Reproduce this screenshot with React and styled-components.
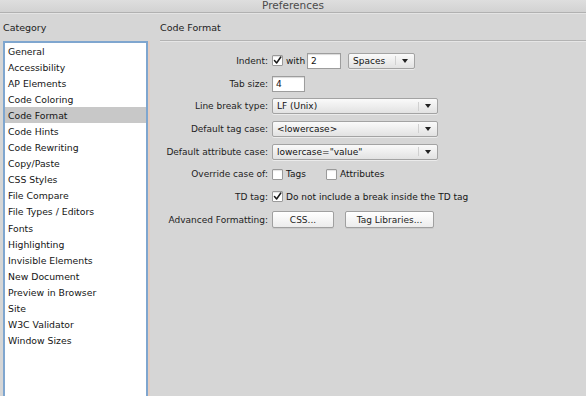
import styled, { createGlobalStyle } from 'styled-components'


const GlobalStyle = createGlobalStyle`
    html, body {
        margin: 0;
        padding: 0;
        background: #d6d6d6;
    }

    body {
        font-family: "DejaVu Sans", "Noto Sans", sans-serif;
        color: #1e1e1e;
    }
`

const StyledWindow = styled.div`
    width: 586px;
    height: 396px;
    overflow: hidden;
    display: flex;
    flex-direction: column;

    background: #d6d6d6;
`

const StyledTitleBar = styled.div`
    height: 12px;
    flex-shrink: 0;
    display: flex;
    align-items: flex-end;
    justify-content: center;

    background: linear-gradient( #dedede, #d2d2d2 );
    border-bottom: 1px solid #b1b1b1;
    box-shadow: 0 1px 0 #e4e4e4;

    color: #4a4a4a;
    font-size: 10.5px;
    line-height: 14px;
`

const StyledBody = styled.div`
    flex: 1;
    display: grid;
    grid-template-columns: 150px 1fr;
    min-height: 0;
`

const StyledSidebar = styled.div`
    display: flex;
    flex-direction: column;
    padding-left: 3px;
    min-height: 0;
`

const StyledHeader = styled.div`
    height: 28px;
    flex-shrink: 0;
    display: flex;
    align-items: center;
    box-sizing: border-box;
    padding-top: 1px;
    margin-left: ${ ({ $indent }) => $indent || 0 }px;

    font-size: 9.5px;
    color: #222;

    ${ ({ $ruled }) => $ruled && `
        border-bottom: 1px solid #b3b3b3;
        box-shadow: 0 1px 0 #e6e6e6;
    ` }
`

const StyledList = styled.ul`
    flex: 1;
    width: 145px;
    box-sizing: border-box;
    margin: 0;
    padding: 0;
    list-style: none;

    background: #fff;
    border: 2px solid #7fa6cf;
    border-bottom: none;
    box-shadow: 2px 0 0 rgba( 236, 200, 180, 0.55 );
`

const StyledItem = styled.li`
    height: 16.1px;
    display: flex;
    align-items: center;
    padding-left: 3px;

    font-size: 9.3px;
    color: #151515;
    white-space: nowrap;

    background: ${ ({ $selected }) => $selected ? '#c8c8c8' : 'transparent' };
`

const StyledMain = styled.div`
    display: flex;
    flex-direction: column;
    min-width: 0;
`

const StyledForm = styled.div`
    display: grid;
    grid-template-columns: 110px 1fr;
    grid-auto-rows: 22.7px;
    column-gap: 4px;
    padding: 8.5px 0 0 8px;
`

const StyledLabel = styled.div`
    display: flex;
    align-items: center;
    justify-content: flex-end;

    font-size: 9px;
    color: #222;
    white-space: nowrap;
`

const StyledControls = styled.div`
    display: flex;
    align-items: center;
    gap: ${ ({ $gap }) => $gap || 4 }px;
`

const StyledCheckLabel = styled.label`
    display: flex;
    align-items: center;
    gap: 3px;

    font-size: 9px;
    color: #151515;
    white-space: nowrap;
`

const StyledBox = styled.span`
    width: 11px;
    height: 11px;
    display: inline-flex;
    align-items: center;
    justify-content: center;
    box-sizing: border-box;

    background: #fff;
    border: 1px solid #9a9a9a;
    border-radius: 1px;
    box-shadow: inset 0 1px 1px rgba( 0, 0, 0, 0.12 );
`

const StyledInput = styled.div`
    width: ${ ({ $width }) => $width }px;
    height: 16px;
    box-sizing: border-box;
    display: flex;
    align-items: center;
    padding-left: 3px;

    background: #fff;
    border: 1px solid #9d9d9d;
    box-shadow: inset 0 1px 1px rgba( 0, 0, 0, 0.15 );

    font-size: 9px;
    color: #111;
`

const StyledSelect = styled.div`
    width: ${ ({ $width }) => $width }px;
    height: 16px;
    box-sizing: border-box;
    display: flex;
    align-items: center;

    background: linear-gradient( #fafafa, #e2e2e2 );
    border: 1px solid #a3a3a3;
    border-radius: 2px;
    box-shadow: 0 1px 0 rgba( 255, 255, 255, 0.5 );

    font-size: 9px;
    color: #111;

    span {
        flex: 1;
        padding-left: 4px;
        white-space: nowrap;
    }
`

const StyledArrow = styled.div`
    width: 18px;
    height: 9px;
    display: flex;
    align-items: center;
    justify-content: center;
    border-left: 1px solid #d0d0d0;
`

const StyledButton = styled.button`
    width: ${ ({ $width }) => $width }px;
    height: 17px;
    margin: 0;
    padding: 0;

    background: linear-gradient( #ffffff, #ececec );
    border: 1px solid #a0a0a0;
    border-radius: 2px;
    box-shadow: 0 1px 0 rgba( 0, 0, 0, 0.06 );

    font-family: inherit;
    font-size: 9px;
    color: #1d1d1d;
`

const StyledSpacer = styled.span`
    width: 3px;
`


const categories = [
    'General',
    'Accessibility',
    'AP Elements',
    'Code Coloring',
    'Code Format',
    'Code Hints',
    'Code Rewriting',
    'Copy/Paste',
    'CSS Styles',
    'File Compare',
    'File Types / Editors',
    'Fonts',
    'Highlighting',
    'Invisible Elements',
    'New Document',
    'Preview in Browser',
    'Site',
    'W3C Validator',
    'Window Sizes'
]


const Check = ({ checked }) => (
    <StyledBox>
        { checked && (
            <svg width="9" height="9" viewBox="0 0 9 9">
                <path d="M1.5 4.6 L3.6 7 L7.8 1" fill="none" stroke="#1a1a1a" strokeWidth="1.5" strokeLinecap="round" strokeLinejoin="round" />
            </svg>
        ) }
    </StyledBox>
)

const Select = ({ width, value }) => (
    <StyledSelect $width={ width }>
        <span>{ value }</span>
        <StyledArrow>
            <svg width="6" height="4" viewBox="0 0 6 4">
                <path d="M0 0 H6 L3 4 Z" fill="#222" />
            </svg>
        </StyledArrow>
    </StyledSelect>
)


const App = () => (
    <StyledWindow>
        <GlobalStyle />
        <StyledTitleBar>Preferences</StyledTitleBar>
        <StyledBody>
            <StyledSidebar>
                <StyledHeader>Category</StyledHeader>
                <StyledList>
                    { categories.map( name => (
                        <StyledItem key={ name } $selected={ name === 'Code Format' }>{ name }</StyledItem>
                    ) ) }
                </StyledList>
            </StyledSidebar>
            <StyledMain>
                <StyledHeader $indent={ 10 } $ruled>Code Format</StyledHeader>
                <StyledForm>
                    <StyledLabel>Indent:</StyledLabel>
                    <StyledControls $gap={ 2 }>
                        <StyledCheckLabel><Check checked />with</StyledCheckLabel>
                        <StyledInput $width={ 34 }>2</StyledInput>
                        <StyledSpacer />
                        <Select width={ 67 } value="Spaces" />
                    </StyledControls>

                    <StyledLabel>Tab size:</StyledLabel>
                    <StyledControls>
                        <StyledInput $width={ 33 }>4</StyledInput>
                    </StyledControls>

                    <StyledLabel>Line break type:</StyledLabel>
                    <StyledControls>
                        <Select width={ 166 } value="LF (Unix)" />
                    </StyledControls>

                    <StyledLabel>Default tag case:</StyledLabel>
                    <StyledControls>
                        <Select width={ 166 } value="<lowercase>" />
                    </StyledControls>

                    <StyledLabel>Default attribute case:</StyledLabel>
                    <StyledControls>
                        <Select width={ 166 } value={ 'lowercase="value"' } />
                    </StyledControls>

                    <StyledLabel>Override case of:</StyledLabel>
                    <StyledControls $gap={ 20 }>
                        <StyledCheckLabel><Check />Tags</StyledCheckLabel>
                        <StyledCheckLabel><Check />Attributes</StyledCheckLabel>
                    </StyledControls>

                    <StyledLabel>TD tag:</StyledLabel>
                    <StyledControls>
                        <StyledCheckLabel><Check checked />Do not include a break inside the TD tag</StyledCheckLabel>
                    </StyledControls>

                    <StyledLabel>Advanced Formatting:</StyledLabel>
                    <StyledControls $gap={ 11 }>
                        <StyledButton $width={ 62 }>CSS...</StyledButton>
                        <StyledButton $width={ 89 }>Tag Libraries...</StyledButton>
                    </StyledControls>
                </StyledForm>
            </StyledMain>
        </StyledBody>
    </StyledWindow>
)


export default App
